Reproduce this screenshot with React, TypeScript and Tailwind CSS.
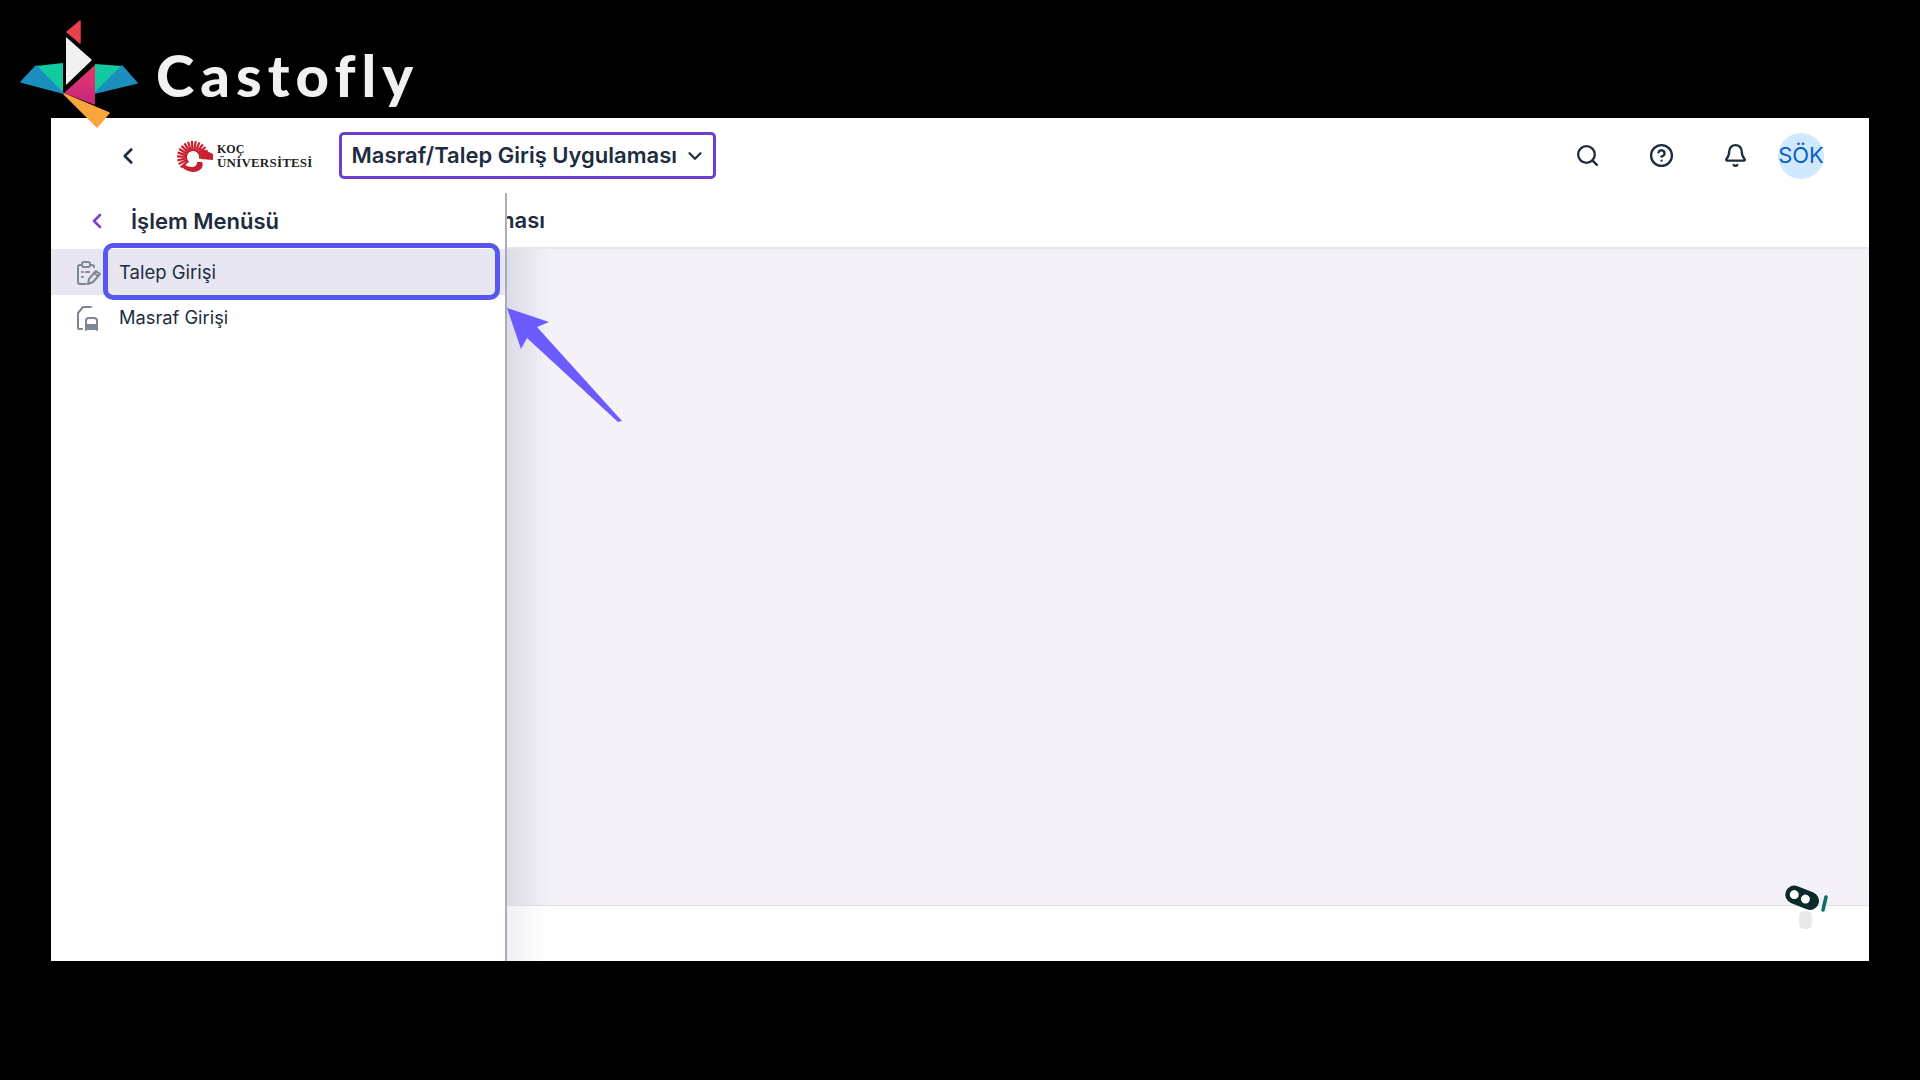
import { Bell, ChevronDown, ChevronLeft, CircleHelp, Search } from "lucide-react";

function CastoflyMark() {
  return (
    <svg width="150" height="135" viewBox="0 0 150 135" className="absolute left-0 top-0 z-20">
      <defs>
        <linearGradient id="mag" x1="0" y1="0" x2="0" y2="1">
          <stop offset="0" stopColor="#e8386a" />
          <stop offset="1" stopColor="#c4277f" />
        </linearGradient>
      </defs>
      <g strokeLinejoin="round">
        <polygon points="80,21 67,32 80,43" fill="#e8404f" stroke="#e8404f" strokeWidth="1.5" />
        <polygon points="66,37 92,60 66,85" fill="#f1f1f1" />
        <polygon points="36,66 63,63 63,93" fill="#12c9a0" />
        <polygon points="36,66 21,82 63,93" fill="#1a8fbd" stroke="#1a8fbd" strokeWidth="1.5" />
        <polygon points="95,64 122,66 95,93" fill="#12c9a0" />
        <polygon points="122,66 137,83 95,93" fill="#1a8fbd" stroke="#1a8fbd" strokeWidth="1.5" />
        <polygon points="95,65 64,93 95,105" fill="url(#mag)" />
        <polygon points="64,94 109,113 97,127" fill="#fba63c" stroke="#fba63c" strokeWidth="1.5" />
      </g>
    </svg>
  );
}

function KocMark() {
  const rays = Array.from({ length: 17 }, (_, i) => 140 + i * 14);
  return (
    <svg width="38" height="34" viewBox="0 0 38 34" className="shrink-0">
      <g stroke="#c8202f" strokeWidth="2.2">
        {rays.map((a) => {
          const r = (a * Math.PI) / 180;
          return (
            <line
              key={a}
              x1={17 + Math.cos(r) * 6}
              y1={18 + Math.sin(r) * 6}
              x2={17 + Math.cos(r) * 16}
              y2={18 + Math.sin(r) * 16}
            />
          );
        })}
      </g>
      <path d="M6 28 C10 33 20 35 25 30 C27 28 27 25 26 23 L21 23 C21 26 19 28 16 28 C13 28 10 27 8 25 Z" fill="#c8202f" />
      <path d="M24 9 L37 15 L37 21 L25 20 Z" fill="#c8202f" />
    </svg>
  );
}

function TalepIcon() {
  return (
    <svg width="26" height="26" viewBox="0 0 26 26" fill="none" stroke="#7b8794" strokeWidth="2" strokeLinecap="round" strokeLinejoin="round">
      <path d="M7 5H5a2 2 0 0 0-2 2v15a2 2 0 0 0 2 2h6" />
      <path d="M15 5h2a2 2 0 0 1 2 2" />
      <rect x="7" y="2" width="8" height="5" rx="2" />
      <path d="M7 12h1M11 12h3M7 17h1" />
      <path d="M13 24l1-5 7-8 4 3-7 8z" />
      <path d="M19 13l4 3" />
    </svg>
  );
}

function MasrafIcon() {
  return (
    <svg width="26" height="26" viewBox="0 0 26 26" fill="none" stroke="#7b8794" strokeWidth="2" strokeLinecap="round" strokeLinejoin="round">
      <path d="M16 2H8L3 8v15a1 1 0 0 0 1 1h3" />
      <path d="M11 25v-9a3 3 0 0 1 3-3h5a3 3 0 0 1 3 3v9" />
      <path d="M11 20h11v4H11z" fill="#7b8794" />
    </svg>
  );
}

function BotWidget() {
  return (
    <svg width="50" height="60" viewBox="0 0 50 60" className="absolute bottom-[20px] right-[38px] z-10">
      <rect x="18" y="30" width="13" height="18" rx="5" fill="#e9e9e9" />
      <g transform="rotate(22 22 16)">
        <rect x="4" y="8" width="35" height="18" rx="9" fill="#0b2b2b" />
        <circle cx="13" cy="17" r="4.500" fill="#fff" />
        <circle cx="25" cy="17" r="4.500" fill="#fff" />
      </g>
      <path d="M45 16 L42 29" stroke="#0b6f66" strokeWidth="3.500" strokeLinecap="round" />
    </svg>
  );
}

function Arrow() {
  return (
    <svg width="140" height="140" viewBox="0 0 140 140" className="absolute left-[490px] top-[290px] z-20">
      <polygon points="17,18 59,32 47,37 132,131 128,132 37,48 31,59" fill="#6c5cff" />
    </svg>
  );
}

export default function App() {
  return (
    <div className="relative h-[1080px] w-[1920px] overflow-hidden bg-black pl-[51px] pt-[118px] font-['Inter',sans-serif]">
      <CastoflyMark />
      <div className="absolute left-[156px] top-[40px] font-['Lato',sans-serif] text-[58px] font-black leading-[70px] tracking-[0.105em] text-[#f1f1f1]">
        Castofly
      </div>
      <Arrow />

      <div className="relative flex h-[843px] w-[1818px] flex-col bg-white">
        <header className="flex h-[75px] shrink-0 items-center">
          <ChevronLeft className="ml-[64px] h-[26px] w-[26px] text-[#1d2d3e]" strokeWidth={2.4} />
          <div className="ml-[35px] flex items-center">
            <KocMark />
            <div className="ml-[3px] font-['Liberation_Serif',serif] font-bold text-[#222]">
              <div className="text-[12px] leading-[13px]">KOÇ</div>
              <div className="text-[13px] leading-[13px] tracking-[0.015em]">ÜNİVERSİTESİ</div>
            </div>
          </div>
          <button
            type="button"
            className="ml-[26px] flex h-[47px] w-[377px] items-center justify-between rounded-[5px] border-[3px] border-[#6b3fd0] pl-[10px] pr-[7px] text-[22px] font-semibold text-[#1d2d3e]"
          >
            <span className="whitespace-nowrap">Masraf/Talep Giriş Uygulaması</span>
            <ChevronDown className="h-[22px] w-[22px]" strokeWidth={2.4} />
          </button>
          <div className="ml-auto mr-[45px] flex items-center text-[#1d2d3e]">
            <Search className="h-[25px] w-[25px]" strokeWidth={2.2} />
            <CircleHelp className="ml-[49px] h-[25px] w-[25px]" strokeWidth={2.2} />
            <Bell className="ml-[49px] h-[25px] w-[25px]" strokeWidth={2.2} />
            <div className="ml-[30px] flex h-[46px] w-[46px] items-center justify-center rounded-full bg-[#d1e9ff] text-[22px] text-[#0a5fc4]">
              SÖK
            </div>
          </div>
        </header>

        <div className="flex min-h-0 flex-1">
          <aside className="relative z-10 flex w-[456px] shrink-0 flex-col border-r-2 border-[#a9aeb6] bg-white">
            <div className="flex h-[56px] shrink-0 items-center pl-[34px]">
              <ChevronLeft className="h-[24px] w-[24px] text-[#7c3fd6]" strokeWidth={2.6} />
              <span className="ml-[22px] text-[22px] font-semibold text-[#1d2d3e]">İşlem Menüsü</span>
            </div>
            <div className="relative flex h-[46px] items-center bg-[#e8e6f2] pl-[24px] pt-[1px]">
              <TalepIcon />
              <span className="ml-[18px] text-[18.500px] text-[#1d2d3e]">Talep Girişi</span>
              <div className="absolute -top-[6px] left-[52px] h-[57px] w-[397px] rounded-[10px] border-[5px] border-[#5a55ee]" />
            </div>
            <div className="flex h-[46px] items-center pl-[24px]">
              <MasrafIcon />
              <span className="ml-[18px] text-[18.300px] text-[#1d2d3e]">Masraf Girişi</span>
            </div>
          </aside>

          <main className="relative flex min-w-0 flex-1 flex-col">
            <div className="flex h-[56px] shrink-0 items-center border-b-2 border-[#e6e6ea]">
              <div className="flex w-[38px] justify-end overflow-hidden whitespace-nowrap text-[22px] font-semibold text-[#1d2d3e]">
                ması
              </div>
            </div>
            <div className="relative flex-1 bg-[#f4f2f8]">
              <div className="absolute inset-y-0 left-0 w-[44px] bg-gradient-to-r from-[#dcdce8] to-[#f4f2f8]" />
            </div>
            <div className="h-[56px] shrink-0 border-t border-[#dedee4] bg-gradient-to-r from-[#f0f0f4] to-white to-[3%]" />
            <BotWidget />
          </main>
        </div>
      </div>
    </div>
  );
}
